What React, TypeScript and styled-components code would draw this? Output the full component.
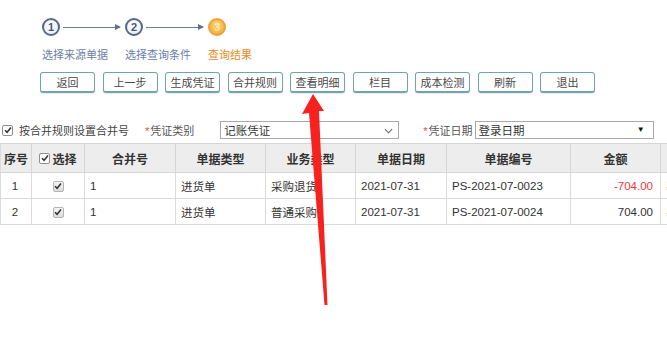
import React from "react";
import styled, {createGlobalStyle} from "styled-components";

const GlobalStyle = createGlobalStyle`
  html, body {
    margin: 0;
    padding: 0;
    background: #ffffff;
  }
  body {
    font-family: "Liberation Sans", "Noto Sans CJK SC", sans-serif;
    color: #333;
  }
`;

const STEPS = [
  {num: 1, label: "选择来源单据"},
  {num: 2, label: "选择查询条件"},
  {num: 3, label: "查询结果", active: true},
];

const BUTTONS = ["返回", "上一步", "生成凭证", "合并规则", "查看明细", "栏目", "成本检测", "刷新", "退出"];

const COLUMNS = [
  {title: "序号", width: 31},
  {title: "选择", width: 53},
  {title: "合并号", width: 91},
  {title: "单据类型", width: 90},
  {title: "业务类型", width: 90},
  {title: "单据日期", width: 91},
  {title: "单据编号", width: 124},
  {title: "金额", width: 90},
  {title: "", width: 90},
];

const ROWS = [
  {no: 1, merge: "1", type: "进货单", biz: "采购退货", date: "2021-07-31", code: "PS-2021-07-0023", amount: "-704.00", extra: "基本"},
  {no: 2, merge: "1", type: "进货单", biz: "普通采购", date: "2021-07-31", code: "PS-2021-07-0024", amount: "704.00", extra: "基本"},
];

const CheckMark = () => (
  <svg width="8" height="8" viewBox="0 0 8 8">
    <path d="M1 4.2 L3.1 6.3 L7 1.6" fill="none" stroke="#333" strokeWidth="1.5" />
  </svg>
);

const App = () => {
  return (
    <Page>
      <GlobalStyle />

      <Steps>
        {STEPS.map((step, i) => (
          <Step key={step.num}>
            <StepHead>
              <Circle $active={step.active}>{step.num}</Circle>
              {i < STEPS.length - 1 && <Connector />}
            </StepHead>
            <StepLabel $active={step.active}>{step.label}</StepLabel>
          </Step>
        ))}
      </Steps>

      <Toolbar>
        {BUTTONS.map((b) => (
          <ToolButton key={b}>{b}</ToolButton>
        ))}
      </Toolbar>

      <FilterRow>
        <Box>
          <CheckMark />
        </Box>
        <FilterText>按合并规则设置合并号</FilterText>
        <FieldLabel $gap={16}>
          <Star>*</Star>凭证类别
        </FieldLabel>
        <SelectBox $gap={26} $width={179}>
          记账凭证
          <Chevron viewBox="0 0 10 6">
            <path d="M1 1 L5 5 L9 1" fill="none" stroke="#666" strokeWidth="1.2" />
          </Chevron>
        </SelectBox>
        <FieldLabel $gap={24}>
          <Star>*</Star>凭证日期
        </FieldLabel>
        <SelectBox $gap={2} $width={179}>
          登录日期
          <Triangle>▼</Triangle>
        </SelectBox>
      </FilterRow>

      <TableWrap>
        <Table>
          <colgroup>
            {COLUMNS.map((c, i) => (
              <col key={i} style={{width: c.width}} />
            ))}
          </colgroup>
          <thead>
            <tr>
              {COLUMNS.map((c, i) => (
                <Th key={i}>
                  {i === 1 ? (
                    <HeadCheck>
                      <Box $light>
                        <CheckMark />
                      </Box>
                      {c.title}
                    </HeadCheck>
                  ) : (
                    c.title
                  )}
                </Th>
              ))}
            </tr>
          </thead>
          <tbody>
            {ROWS.map((r) => (
              <tr key={r.no}>
                <Td $align="center">{r.no}</Td>
                <Td $align="center">
                  <CellCheck>
                    <Box $gray>
                      <CheckMark />
                    </Box>
                  </CellCheck>
                </Td>
                <Td>{r.merge}</Td>
                <Td>{r.type}</Td>
                <Td>{r.biz}</Td>
                <Td>{r.date}</Td>
                <Td>{r.code}</Td>
                <Td $align="right" $red={r.amount.startsWith("-")}>
                  {r.amount}
                </Td>
                <Td $tan>{r.extra}</Td>
              </tr>
            ))}
          </tbody>
        </Table>
      </TableWrap>

      <Overlay width="667" height="356" viewBox="0 0 667 356">
        <polygon points="313,94 302,114 309,113 324.5,305 327.5,305 319,111 324,111" fill="#f7221e" />
      </Overlay>
    </Page>
  );
};

export default App;

const Page = styled.div`
  position: relative;
  width: 667px;
  height: 356px;
  overflow: hidden;
  background: #fff;
`;

const Steps = styled.div`
  display: flex;
  padding: 18px 0 0 42px;
`;

const Step = styled.div`
  display: flex;
  flex-direction: column;
  width: 83px;
`;

const StepHead = styled.div`
  display: flex;
  align-items: center;
  height: 18px;
`;

const Circle = styled.div<{$active?: boolean}>`
  box-sizing: border-box;
  width: 18px;
  height: 18px;
  border-radius: 50%;
  display: flex;
  align-items: center;
  justify-content: center;
  font-size: 11px;
  font-weight: bold;
  border: 2px solid ${(p) => (p.$active ? "#eaa23a" : "#56688a")};
  background: ${(p) =>
    p.$active
      ? "radial-gradient(circle at 50% 35%, #fcd67a, #f2a632)"
      : "radial-gradient(circle at 50% 35%, #ffffff, #e6ebf3)"};
  color: ${(p) => (p.$active ? "#fde9b6" : "#44567a")};
`;

const Connector = styled.div`
  position: relative;
  flex: 1;
  height: 1px;
  margin: 0 5px 0 3px;
  background: #6e7f9c;

  &::after {
    content: "";
    position: absolute;
    right: -1px;
    top: -3px;
    border-left: 6px solid #5f7092;
    border-top: 3.5px solid transparent;
    border-bottom: 3.5px solid transparent;
  }
`;

const StepLabel = styled.div<{$active?: boolean}>`
  margin-top: 12px;
  font-size: 11px;
  line-height: 14px;
  white-space: nowrap;
  color: ${(p) => (p.$active ? "#e88a26" : "#6b80a9")};
`;

const Toolbar = styled.div`
  display: flex;
  gap: 7.5px;
  margin: 10px 0 0 40px;
`;

const ToolButton = styled.div`
  box-sizing: border-box;
  width: 55px;
  height: 21px;
  display: flex;
  align-items: center;
  justify-content: center;
  font-size: 11px;
  color: #4a4a4a;
  background: #fff;
  border: 1px solid #6ea5b1;
  border-bottom-width: 2px;
  border-radius: 3px;
  box-shadow: 0 1px 1px rgba(0, 0, 0, 0.08);
`;

const FilterRow = styled.div`
  display: flex;
  align-items: center;
  height: 18px;
  margin-top: 28px;
  padding-left: 2px;
`;

const Box = styled.span<{$gray?: boolean; $light?: boolean}>`
  box-sizing: border-box;
  width: 11px;
  height: 11px;
  display: inline-flex;
  align-items: center;
  justify-content: center;
  border: 1px solid ${(p) => (p.$gray ? "#b4b4b4" : "#8f8f8f")};
  border-radius: 2px;
  background: ${(p) => (p.$gray ? "linear-gradient(#f4f4f4, #dcdcdc)" : "#fff")};
  flex-shrink: 0;
`;

const FilterText = styled.span`
  margin-left: 6px;
  font-size: 11px;
  color: #444;
  white-space: nowrap;
`;

const FieldLabel = styled.span<{$gap: number}>`
  margin-left: ${(p) => p.$gap}px;
  font-size: 11px;
  color: #555;
  white-space: nowrap;
`;

const Star = styled.span`
  color: #e64646;
  margin-right: 1px;
`;

const SelectBox = styled.div<{$gap: number; $width: number}>`
  position: relative;
  box-sizing: border-box;
  margin-left: ${(p) => p.$gap}px;
  width: ${(p) => p.$width}px;
  height: 18px;
  padding-left: 3px;
  display: flex;
  align-items: center;
  font-size: 11.5px;
  color: #333;
  border: 1px solid #a9a9a9;
  background: #fff;
`;

const Chevron = styled.svg`
  position: absolute;
  right: 5px;
  top: 6px;
  width: 9px;
  height: 6px;
`;

const Triangle = styled.span`
  position: absolute;
  right: 8px;
  top: 3px;
  font-size: 8px;
  color: #111;
`;

const TableWrap = styled.div`
  margin-top: 4px;
  width: 667px;
  overflow: hidden;
`;

const Table = styled.table`
  border-collapse: collapse;
  table-layout: fixed;
  width: 750px;
`;

const Th = styled.th`
  height: 28px;
  padding: 0;
  font-size: 12px;
  font-weight: bold;
  color: #333;
  text-align: center;
  background: #ededed;
  border: 1px solid #d5d5d5;
  border-left-color: #dcdcdc;
  white-space: nowrap;
  overflow: hidden;
`;

const HeadCheck = styled.span`
  display: inline-flex;
  align-items: center;
  gap: 2px;
`;

const Td = styled.td<{$align?: string; $red?: boolean; $tan?: boolean}>`
  height: 25px;
  padding: 0 7px 0 5px;
  font-size: 11.5px;
  text-align: ${(p) => p.$align || "left"};
  color: ${(p) => (p.$red ? "#e23b3b" : p.$tan ? "#b08a50" : "#333")};
  border: 1px solid #dadada;
  white-space: nowrap;
  overflow: hidden;
`;

const CellCheck = styled.span`
  display: inline-flex;
  vertical-align: middle;
  margin-left: 2px;
`;

const Overlay = styled.svg`
  position: absolute;
  left: 0;
  top: 0;
  pointer-events: none;
`;
